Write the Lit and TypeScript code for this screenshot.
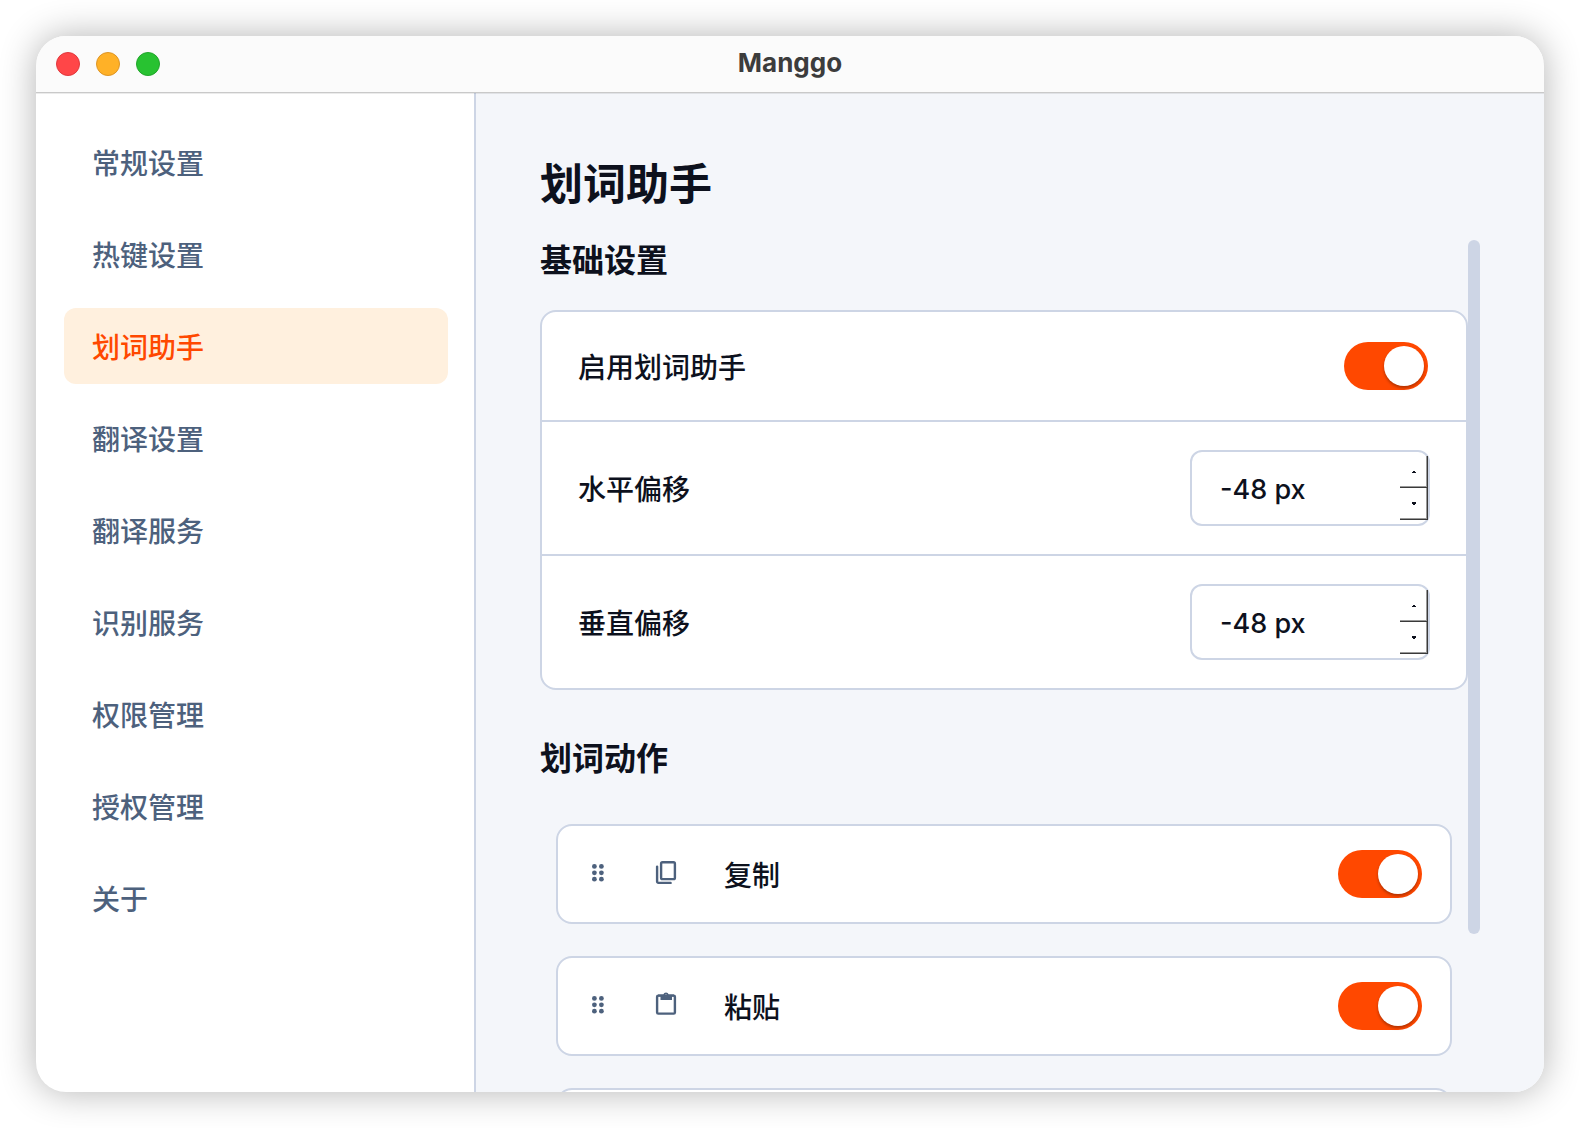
import { LitElement, html, css, svg } from "lit";
import { customElement, property, state } from "lit/decorators.js";

const dragIcon = svg`<svg class="icon drag" viewBox="0 0 28 28" aria-hidden="true">
  <circle cx="10.4" cy="6.4" r="2.4"/><circle cx="17.4" cy="6.4" r="2.4"/>
  <circle cx="10.4" cy="12.8" r="2.4"/><circle cx="17.4" cy="12.8" r="2.4"/>
  <circle cx="10.4" cy="19.2" r="2.4"/><circle cx="17.4" cy="19.2" r="2.4"/>
</svg>`;

const copyIcon = svg`<svg class="icon" viewBox="0 0 28 28" aria-hidden="true">
  <rect x="9.1" y="2.3" width="13.8" height="16.8" rx="1.4" fill="none" stroke="currentColor" stroke-width="2.4"/>
  <path fill="none" stroke="currentColor" stroke-width="2.4" stroke-linecap="round" stroke-linejoin="round" d="M5.1 6.6v15a1.3 1.3 0 0 0 1.3 1.3H18.6"/>
</svg>`;

const pasteIcon = svg`<svg class="icon" viewBox="0 0 28 28" aria-hidden="true">
  <rect x="5.1" y="3.6" width="17.8" height="18" rx="1.2" fill="none" stroke="currentColor" stroke-width="2.4"/>
  <path fill-rule="evenodd" d="M6 2.5h5.3a2.8 2.8 0 0 1 5.4 0H22v2h-2V8H8.500V4.500H6zM14 2.300a1 1 0 1 0 0 2a1 1 0 0 0 0-2z"/>
</svg>`;

@customElement("toggle-switch")
export class ToggleSwitch extends LitElement {
  @property() label = "";
  @property({ type: Boolean }) checked = false;

  static styles = css`
    :host { display: block; flex: none; }
    .track {
      appearance: none;
      display: flex;
      box-sizing: border-box;
      width: 84px;
      height: 48px;
      margin: 0;
      padding: 4px;
      border-radius: 24px;
      background: #cdd5e5;
      cursor: pointer;
    }
    .track::before {
      content: "";
      width: 40px;
      height: 40px;
      border-radius: 50%;
      background: #fff;
      box-shadow: 0 2px 3px rgba(0, 0, 0, 0.3);
    }
    .track:checked { justify-content: flex-end; background: #ff4800; }
  `;

  render() {
    return html`<input class="track" type="checkbox" role="switch" aria-label=${this.label}
      .checked=${this.checked}
      @change=${(e: Event) => (this.checked = (e.target as HTMLInputElement).checked)} />`;
  }
}

@customElement("offset-field")
export class OffsetField extends LitElement {
  @property() label = "";
  @property({ type: Number }) value = 0;

  static styles = css`
    :host { display: block; flex: none; }
    .field {
      box-sizing: border-box;
      display: flex;
      width: 240px;
      height: 76px;
      border: 2px solid #cdd5e5;
      border-radius: 12px;
      background: #fff;
    }
    .box {
      flex: 1;
      min-width: 0;
      border: 0;
      padding: 3px 0 0 28px;
      background: none;
      outline: none;
      color: #0d111d;
      font: 500 27px Inter, "Liberation Sans", sans-serif;
    }
    .spin {
      display: grid;
      grid-template-rows: 1fr 1fr;
      width: 28px;
      padding: 4px 0;
    }
    .step {
      display: grid;
      place-items: center;
      min-height: 0;
      padding: 0;
      border: 0 solid #3a3a3a;
      border-width: 0 1px 1px 0;
      background: none;
      box-shadow: inset -1px -1px 0 #999;
      color: #0d111d;
    }
    .mark { display: block; width: 4px; height: 3px; fill: currentColor; }
  `;

  private step(by: number) {
    this.value += by;
  }

  render() {
    return html`<div class="field">
      <input class="box" type="text" aria-label=${this.label} .value=${`${this.value} px`} />
      <div class="spin">
        <button class="step" aria-label="+" @click=${() => this.step(1)}>
          <svg class="mark" viewBox="0 0 4 3"><path d="M1 1h2v1h1v1H0V2h1z"/></svg>
        </button>
        <button class="step" aria-label="-" @click=${() => this.step(-1)}>
          <svg class="mark" viewBox="0 0 4 3"><path d="M0 0h4v2H3v1H1V2H0z"/></svg>
        </button>
      </div>
    </div>`;
  }
}

@customElement("app-root")
export class AppRoot extends LitElement {
  @state() private current = 2;

  private sections = [
    "常规设置", "热键设置", "划词助手", "翻译设置", "翻译服务",
    "识别服务", "权限管理", "授权管理", "关于",
  ];
  private offsets = [
    { label: "水平偏移", value: -48 },
    { label: "垂直偏移", value: -48 },
  ];
  private actions = [
    { label: "复制", icon: copyIcon },
    { label: "粘贴", icon: pasteIcon },
    { label: "", icon: copyIcon },
  ];

  static styles = css`
    :host {
      display: flex;
      box-sizing: border-box;
      height: 100vh;
      padding: 36px;
      background: #fff;
      color: #0d111d;
      font: 500 28px/40px Inter, "Noto Sans CJK SC", sans-serif;
    }
    .window {
      flex: 1;
      min-width: 0;
      display: flex;
      flex-direction: column;
      border-radius: 30px;
      overflow: hidden;
      background: #fff;
      box-shadow: 0 0 36px rgba(0, 0, 0, 0.3);
    }
    .titlebar {
      flex: none;
      display: grid;
      grid-template-columns: 1fr auto 1fr;
      align-items: center;
      height: 56px;
      padding: 0 20px;
      background: #fbfbfb;
      border-bottom: 1px solid #c9c9c9;
      box-shadow: 0 1px 0 rgba(0, 0, 0, 0.08);
      z-index: 1;
    }
    .lights { display: flex; gap: 16px; }
    .light {
      box-sizing: border-box;
      width: 24px;
      height: 24px;
      padding: 0;
      border: 1px solid #e0383d;
      border-radius: 50%;
      background: #ff4648;
    }
    .light.min { background: #ffb127; border-color: #dd9525; }
    .light.max { background: #28c231; border-color: #22a52b; }
    .name {
      margin: 0;
      padding-bottom: 2px;
      font-size: 26px;
      line-height: 32px;
      font-weight: 700;
      color: #3c3c3c;
    }
    .body { flex: 1; min-height: 0; display: flex; }
    .sidebar {
      flex: none;
      display: flex;
      flex-direction: column;
      gap: 16px;
      box-sizing: border-box;
      width: 440px;
      padding: 31px 26px 0 28px;
      border-right: 2px solid #cdd5e5;
    }
    .item {
      display: block;
      padding: 20px 28px 16px;
      border-radius: 12px;
      color: #4d617d;
      text-decoration: none;
    }
    .item.on { background: #fff0de; color: #ff4800; }
    .main {
      flex: 1;
      min-width: 0;
      display: flex;
      flex-direction: column;
      padding: 57px 64px 0;
      background: #f4f6fa;
    }
    .title { margin: 0 0 22px; font-size: 43px; line-height: 68px; font-weight: 700; }
    .scroller { flex: 1; min-height: 0; display: flex; }
    .content { flex: 1; min-width: 0; overflow: hidden; }
    .bar { flex: none; width: 12px; }
    .thumb { height: 694px; border-radius: 6px; background: #cdd5e5; }
    .heading { margin: 0; font-size: 32px; line-height: 42px; font-weight: 700; }
    .card {
      margin: 28px 0 48px;
      border: 2px solid #cdd5e5;
      border-radius: 16px;
      background: #fff;
    }
    .row {
      display: flex;
      align-items: center;
      justify-content: space-between;
      padding: 28px 36px;
    }
    .row.toggle { padding: 30px 38px 30px 36px; }
    .row + .row { border-top: 2px solid #cdd5e5; }
    .actions {
      display: flex;
      flex-direction: column;
      gap: 32px;
      margin: 0;
      padding: 44px 16px;
      list-style: none;
    }
    .action {
      box-sizing: border-box;
      display: flex;
      align-items: center;
      height: 100px;
      flex: none;
      padding: 0 28px;
      border: 2px solid #cdd5e5;
      border-radius: 16px;
      background: #fff;
    }
    .icon { flex: none; width: 28px; height: 28px; margin-right: 44px; fill: currentColor; color: #4d617d; }
    .icon.drag { margin: 0 40px 0 -2px; cursor: grab; }
    .label { padding-top: 4px; }
    .text { flex: 1; padding-top: 4px; }
  `;

  render() {
    return html`<div class="window">
      <header class="titlebar">
        <div class="lights">
          <button class="light" aria-label="关闭"></button>
          <button class="light min" aria-label="最小化"></button>
          <button class="light max" aria-label="缩放"></button>
        </div>
        <p class="name">Manggo</p>
      </header>
      <div class="body">
        <nav class="sidebar">
          ${this.sections.map((s, i) => html`<a class="item ${i === this.current ? "on" : ""}" href="#${i}"
            @click=${() => (this.current = i)}>${s}</a>`)}
        </nav>
        <main class="main">
          <h1 class="title">划词助手</h1>
          <div class="scroller">
            <div class="content">
              <h2 class="heading">基础设置</h2>
              <div class="card">
                <div class="row toggle">
                  <span class="label">启用划词助手</span>
                  <toggle-switch label="启用划词助手" checked></toggle-switch>
                </div>
                ${this.offsets.map((o) => html`<div class="row">
                  <span class="label">${o.label}</span>
                  <offset-field label=${o.label} .value=${o.value}></offset-field>
                </div>`)}
              </div>
              <h2 class="heading">划词动作</h2>
              <ul class="actions">
                ${this.actions.map((a) => html`<li class="action">
                  ${dragIcon}${a.icon}
                  <span class="text">${a.label}</span>
                  <toggle-switch label=${a.label} checked></toggle-switch>
                </li>`)}
              </ul>
            </div>
            <div class="bar"><div class="thumb"></div></div>
          </div>
        </main>
      </div>
    </div>`;
  }
}
